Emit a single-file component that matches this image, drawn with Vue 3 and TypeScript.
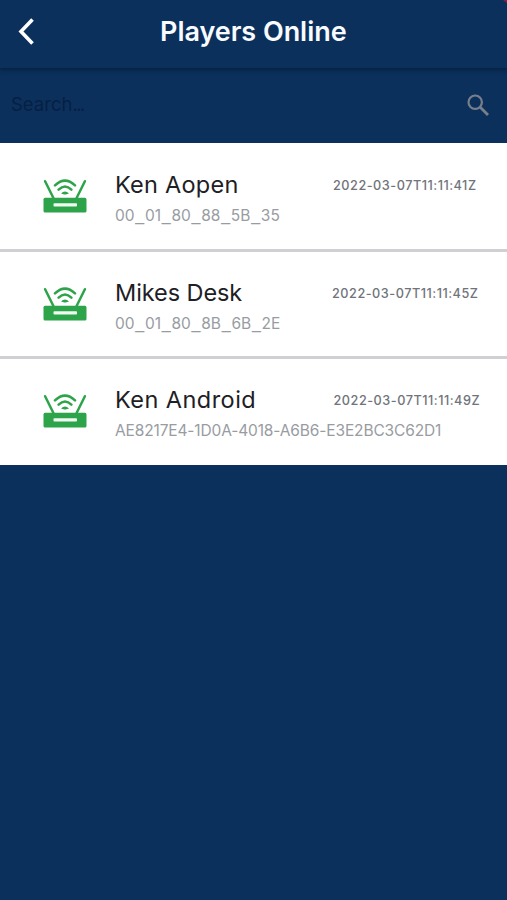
<script setup lang="ts">
interface Player {
  name: string
  id: string
  seen: string
  key: string
}

const players: Player[] = [
  { key: 'aopen', name: 'Ken Aopen', id: '00_01_80_88_5B_35', seen: '2022-03-07T11:11:41Z' },
  { key: 'desk', name: 'Mikes Desk', id: '00_01_80_8B_6B_2E', seen: '2022-03-07T11:11:45Z' },
  { key: 'android', name: 'Ken Android', id: 'AE8217E4-1D0A-4018-A6B6-E3E2BC3C62D1', seen: '2022-03-07T11:11:49Z' },
]

// Splits an identifier so that its underscores can be styled apart from the digits.
const idParts = (id: string): string[] => id.split(/(_)/)
</script>

<template>
  <main class="screen">
    <header class="bar">
      <svg class="back" viewBox="0 0 20 30" width="20" height="30">
        <path d="M16.5 3.5 5 15.5l11.5 12" fill="none" stroke="#fff" stroke-width="3.6" />
      </svg>
      <h1 class="title">Players Online</h1>
      <span class="corner"></span>
    </header>

    <div class="search">
      <span class="hint">Search<span class="dots">...</span></span>
      <svg class="glass" viewBox="0 0 24 24" width="24" height="24">
        <circle cx="9.2" cy="9.2" r="6.7" fill="none" stroke="#777f8b" stroke-width="2.2" />
        <path d="m14 14 8 8" fill="none" stroke="#777f8b" stroke-width="2.9" />
      </svg>
    </div>

    <ul class="list">
      <li v-for="player in players" :key="player.key" class="row">
        <svg class="router" viewBox="0 0 44 36" width="44" height="36">
          <g fill="none" stroke="#2da449" stroke-linecap="round">
            <path d="M2.1 2.2 10.4 19M41.9 2.2 33.6 19" stroke-width="2.5" />
            <path d="M12 6.4Q22 -3.2 32 6.4M15.6 10.6Q22 4.4 28.4 10.6" stroke-width="2.5" />
          </g>
          <path d="M18 14.6Q22 10.6 26 14.6L22.6 15.6h-1.2Z" fill="#2da449" />
          <rect x=".5" y="18.8" width="43" height="14.7" rx="1.6" fill="#2da449" />
          <rect x="10.5" y="24.3" width="23.5" height="3.2" rx=".8" fill="#effaf1" />
        </svg>
        <div class="info">
          <div class="name" :class="player.key">{{ player.name }}</div>
          <div class="ident" :class="player.key"><span v-for="(part, i) in idParts(player.id)" :key="i" :class="{ under: part === '_' }">{{ part }}</span></div>
        </div>
        <time class="seen" :class="player.key">{{ player.seen }}</time>
      </li>
    </ul>
  </main>
</template>

<style>
body {
  background: #0b305c;
}
</style>

<style scoped>
.screen {
  position: relative;
  height: 900px;
  overflow: hidden;
  background: #0b305c;
  font-family: Inter, "Liberation Sans", sans-serif;
}
.bar {
  display: flex;
  height: 68px;
  box-sizing: border-box;
  padding-left: 16px;
  box-shadow: 0 1px 4px 1px rgba(3, 25, 48, 0.65);
}
.back {
  margin-top: 16px;
}
.title {
  margin: 15px 0 0 124px;
  color: #f8fbff;
  font-size: 27px;
  font-weight: 600;
  line-height: 34px;
  letter-spacing: -0.04px;
  white-space: nowrap;
}
.corner {
  position: absolute;
  top: 0;
  right: 0;
  width: 4px;
  height: 3px;
  background: #8b1f45;
  clip-path: polygon(0 0, 100% 0, 100% 100%);
}
.search {
  display: flex;
  justify-content: space-between;
  height: 75px;
  box-sizing: border-box;
  padding: 25px 17px 0 11px;
}
.hint {
  color: #071f44;
  font-size: 18.5px;
  line-height: 22px;
}
.dots {
  letter-spacing: -1.5px;
}
.list {
  margin: 0;
  padding: 0;
  list-style: none;
}
.row {
  display: flex;
  height: 107px;
  box-sizing: border-box;
  padding-left: 42.5px;
  border-bottom: 3px solid #cfd0d4;
  background: #fff;
}
.list .row:first-child {
  height: 109px;
}
.list .row:last-child {
  height: 106px;
  border-bottom: 0;
}
.router {
  margin-top: 35.5px;
  flex: none;
}
.info {
  width: 218px;
  margin-left: 28.5px;
  padding-top: 27px;
  flex: none;
  white-space: nowrap;
}
.list .row:not(:first-child) .info {
  padding-top: 26px;
}
.list .row:not(:first-child) .router {
  margin-top: 34.5px;
}
.list .row:not(:first-child) .seen {
  margin-top: 34px;
}
.name {
  color: #1d2025;
  font-size: 23.5px;
  line-height: 30px;
}
.name.aopen {
  letter-spacing: 0.25px;
}
.name.desk {
  letter-spacing: -0.08px;
}
.name.android {
  letter-spacing: 0.45px;
}
.ident {
  margin-top: 6px;
  color: #989ca2;
  font-size: 15.5px;
  line-height: 20px;
}
.ident.android {
  letter-spacing: -0.14px;
}
.under {
  padding: 0 0.75px;
  font-family: "Liberation Sans", sans-serif;
  font-size: 16px;
}
.seen {
  margin-top: 35px;
  color: #70747a;
  font-size: 12.7px;
  font-weight: 500;
  line-height: 16px;
  letter-spacing: 0.52px;
  white-space: nowrap;
}
.seen.desk {
  margin-left: -1px;
}
.seen.android {
  margin-left: 0.5px;
}
</style>
